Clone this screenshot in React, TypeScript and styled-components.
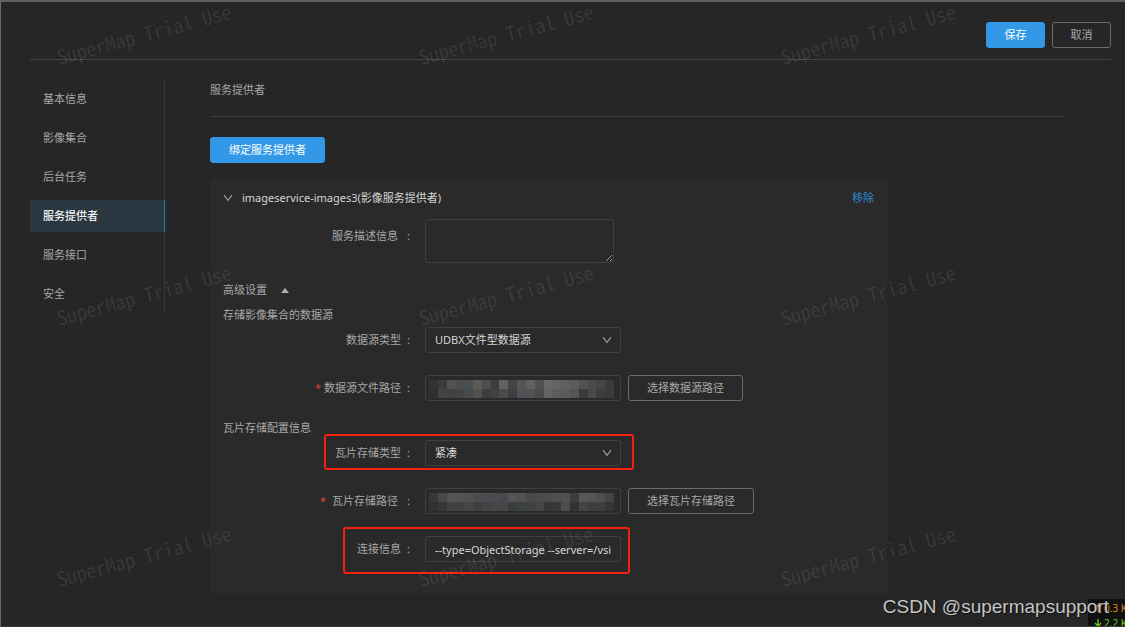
import React from "react";
import styled, { createGlobalStyle } from "styled-components";

const GlobalStyle = createGlobalStyle`
  *, *::before, *::after { box-sizing: border-box; }
  html { color-scheme: dark; }
  body {
    margin: 0;
    background: #262626;
    color: #a8a8a8;
    font-family: "Noto Sans", "Noto Sans CJK SC", sans-serif;
    font-size: 11px;
    line-height: 16px;
  }
  button, input, select, textarea { font: inherit; color: inherit; margin: 0; }
`;

const Page = styled.div`
  position: relative;
  min-height: 100vh;
  overflow: hidden;
  background: #262626;
  border-top: 2px solid #606060;
  border-left: 1px solid #6a6a6a;
  border-bottom: 1px solid #3c3a3a;
  padding: 0 14px 32px 29px;
`;

const TopBar = styled.header`
  display: flex;
  justify-content: flex-end;
  gap: 7px;
  padding: 20px 0 11px;
  border-bottom: 1px solid #454545;
`;

const Button = styled.button<{ $primary?: boolean }>`
  height: 26px;
  padding: 0 18px;
  border-radius: 3px;
  border: 1px solid ${(p) => (p.$primary ? "#3399e6" : "#6c6c6c")};
  background: ${(p) => (p.$primary ? "#3399e6" : "transparent")};
  color: ${(p) => (p.$primary ? "#ffffff" : "#a8a8a8")};
  line-height: 16px;
  white-space: nowrap;
  cursor: pointer;
`;

const ActionButton = styled(Button)`
  min-width: 59px;
  padding: 0 17px;
`;

const Body = styled.div`
  display: flex;
  align-items: flex-start;
  gap: 45px;
  padding-top: 20px;
`;

const SideNav = styled.nav`
  flex: 0 0 135px;
  display: flex;
  flex-direction: column;
  gap: 7px;
  padding: 3px 0 1px;
  border-right: 1px solid #383838;
`;

const NavItem = styled.a<{ $active?: boolean }>`
  display: flex;
  align-items: center;
  height: 32px;
  padding-left: 13px;
  margin-right: -1px;
  text-decoration: none;
  color: ${(p) => (p.$active ? "#f4f4f4" : "#a8a8a8")};
  font-weight: ${(p) => (p.$active ? 500 : 400)};
  background: ${(p) => (p.$active ? "#2a3741" : "transparent")};
  border-right: 1px solid ${(p) => (p.$active ? "#3378ad" : "transparent")};
`;

const Main = styled.main`
  flex: 1;
  min-width: 0;
  margin-right: 46px;
`;

const Title = styled.h1`
  margin: 0 0 20px;
  padding: 2px 0 18px;
  font-size: 11px;
  line-height: 16px;
  font-weight: 400;
  border-bottom: 1px solid #3b3b3b;
`;

const Card = styled.section`
  max-width: 677px;
  margin-top: 15px;
  padding: 8px 13px 32px;
  border-radius: 3px;
  background: #2a2a2a;
`;

const CardHeader = styled.div`
  display: flex;
  align-items: center;
  gap: 9px;
  height: 24px;
  margin-bottom: 9px;
  color: #d6d6d6;
`;

const CardName = styled.h2`
  flex: 1;
  margin: 0;
  font-size: 11px;
  font-weight: 400;
`;

const TextLink = styled.a`
  color: #2f86cc;
  text-decoration: none;
`;

const Advanced = styled.button`
  display: flex;
  align-items: center;
  gap: 14px;
  height: 24px;
  margin-top: 15px;
  padding: 0;
  border: 0;
  background: none;
  cursor: pointer;
`;

const Section = styled.h3<{ $spaced?: boolean }>`
  height: 24px;
  margin: ${(p) => (p.$spaced ? "15px" : "1px")} 0 0;
  font-size: 11px;
  line-height: 24px;
  font-weight: 400;
`;

const Row = styled.div<{ $spaced?: boolean }>`
  position: relative;
  display: flex;
  align-items: flex-start;
  margin-top: ${(p) => (p.$spaced ? "22px" : "0")};
`;

const Label = styled.label<{ $tall?: boolean }>`
  flex: 0 0 202px;
  display: flex;
  justify-content: flex-end;
  padding-right: 15px;
  line-height: ${(p) => (p.$tall ? "34px" : "26px")};
`;

const Required = styled.span<{ $wide?: boolean }>`
  margin-right: ${(p) => (p.$wide ? "6px" : "3px")};
  color: #d9433f;
`;

const Colon = styled.span<{ $wide?: boolean }>`
  margin-left: ${(p) => (p.$wide ? "9px" : "6px")};
`;

const Field = styled.div`
  position: relative;
  width: 196px;
  margin-right: 7px;
`;

const fieldLook = `
  display: block;
  border: 1px solid #404040;
  border-radius: 3px;
  background: transparent;
  color: #d6d6d6;
  outline: none;
`;

const TextArea = styled.textarea`
  ${fieldLook}
  width: 189px;
  height: 44px;
  resize: both;
`;

const Input = styled.input`
  ${fieldLook}
  width: 100%;
  height: 26px;
  padding: 0 9px;
`;

const Select = styled.select`
  ${fieldLook}
  width: 100%;
  height: 26px;
  padding: 0 24px 0 9px;
  appearance: none;
`;

const SelectArrow = styled.span`
  position: absolute;
  top: 8px;
  right: 9px;
  display: flex;
  pointer-events: none;
`;

const Redaction = styled.svg`
  position: absolute;
  top: 5px;
  left: 4px;
  width: 185px;
  height: 18px;
  pointer-events: none;
`;

const Highlight = styled.div<{ $inset: string }>`
  position: absolute;
  inset: ${(p) => p.$inset};
  border: 2px solid #f5200f;
  border-radius: 3px;
  pointer-events: none;
`;

const Watermarks = styled.div`
  position: absolute;
  inset: 0;
  display: grid;
  grid-template-columns: repeat(auto-fill, 362px);
  grid-auto-rows: 261px;
  overflow: hidden;
  pointer-events: none;
`;

const Watermark = styled.span`
  justify-self: start;
  align-self: start;
  margin: 22px 0 0 53px;
  font-family: "Noto Sans CJK SC", monospace;
  font-feature-settings: "hwid";
  font-size: 20px;
  line-height: 20px;
  white-space: nowrap;
  color: rgba(255, 255, 255, 0.09);
  transform: rotate(-15deg);
`;

const NetMeter = styled.div`
  position: absolute;
  right: 0;
  bottom: -1px;
  width: 37px;
  height: 28px;
  padding: 1px 0 0 6px;
  overflow: hidden;
  background: #111111;
`;

const Rate = styled.div<{ $up?: boolean }>`
  display: flex;
  align-items: center;
  gap: 2px;
  width: 60px;
  height: 15px;
  font-size: 10px;
  white-space: nowrap;
  color: ${(p) => (p.$up ? "#d98a12" : "#66d012")};
`;

const Credit = styled.div`
  position: absolute;
  right: 16px;
  bottom: 7px;
  font-family: "Liberation Sans", Arial, sans-serif;
  font-size: 19px;
  line-height: 24px;
  color: #c4c4c4;
  text-shadow: 1px 1px 1px #111111;
`;

const Chevron = () => (
  <svg width="10" height="10" viewBox="0 0 10 10" fill="none" stroke="#a4a4a4" strokeWidth="1.1">
    <path d="M1 2.2 L5 7.4 L9 2.2" />
  </svg>
);

const Triangle = () => (
  <svg width="8" height="5" viewBox="0 0 8 5" fill="#b0b0b0">
    <path d="M4 0 L8 5 H0 Z" />
  </svg>
);

const Arrow = ({ up }: { up?: boolean }) => (
  <svg width="8" height="8" viewBox="0 0 8 8" fill="none" stroke="currentColor" strokeWidth="1.3">
    <path d={up ? "M4 8 V1 M1 4 L4 1 L7 4" : "M4 0 V7 M1 4 L4 7 L7 4"} />
  </svg>
);

const Mosaic = ({ rows }: { rows: string[][] }) => (
  <Redaction viewBox="0 0 21 2" preserveAspectRatio="none" shapeRendering="crispEdges" aria-hidden="true">
    {rows.map((row, y) =>
      row.map((c, x) => <rect key={`${x}-${y}`} x={x} y={y} width="1" height="1" fill={`#${c}`} />)
    )}
  </Redaction>
);

const sourceTiles = [
  "303432 3b3b3b 555250 4b4b50 485050 5c5c57 4e4e4e 3c3c3e 626262 454545 555555 5f6060 505052 686868 656565 625f60 5c5c5c 525252 4b4b4b 474447 3a3b3e".split(" "),
  "303231 444442 414141 424345 464a4a 52524d 3c3e3e 414343 4b4b48 403d42 505356 515454 4a494c 646466 5d5b5b 5b5959 535653 3b3b3c 4a4a4d 3c3d3d 393b3b".split(" "),
];

const tileTiles = [
  "353a38 4c4847 555355 555355 525252 4e4b51 4e4b53 4c4c50 484851 555557 505252 4c4647 4b4c4c 4b4d4d 505050 505050 3d3d3b 565858 545655 4f4f4d 43433f".split(" "),
  "303231 363837 424242 40403f 454548 3d4040 424444 474545 484747 3a3d3d 3d4040 3e4141 444545 363636 393939 4c4d4f 333333 454545 3d3e3d 3d403e 333634".split(" "),
];

const navItems = ["基本信息", "影像集合", "后台任务", "服务提供者", "服务接口", "安全"];

export default function App() {
  return (
    <>
      <GlobalStyle />
      <Page>
        <TopBar>
          <ActionButton $primary type="button">保存</ActionButton>
          <ActionButton type="button">取消</ActionButton>
        </TopBar>
        <Body>
          <SideNav>
            {navItems.map((name) => (
              <NavItem key={name} href="#" $active={name === "服务提供者"}>{name}</NavItem>
            ))}
          </SideNav>
          <Main>
            <Title>服务提供者</Title>
            <Button $primary type="button">绑定服务提供者</Button>
            <Card>
              <CardHeader>
                <Chevron />
                <CardName>imageservice-images3(影像服务提供者)</CardName>
                <TextLink href="#">移除</TextLink>
              </CardHeader>
              <Row>
                <Label htmlFor="description" $tall>服务描述信息<Colon $wide>:</Colon></Label>
                <TextArea id="description" />
              </Row>
              <Advanced type="button">高级设置<Triangle /></Advanced>
              <Section>存储影像集合的数据源</Section>
              <Row>
                <Label htmlFor="source-type">数据源类型<Colon>:</Colon></Label>
                <Field>
                  <Select id="source-type"><option>UDBX文件型数据源</option></Select>
                  <SelectArrow><Chevron /></SelectArrow>
                </Field>
              </Row>
              <Row $spaced>
                <Label htmlFor="source-path"><Required>*</Required>数据源文件路径<Colon>:</Colon></Label>
                <Field>
                  <Input id="source-path" />
                  <Mosaic rows={sourceTiles} />
                </Field>
                <Button type="button">选择数据源路径</Button>
              </Row>
              <Section $spaced>瓦片存储配置信息</Section>
              <Row>
                <Label htmlFor="tile-type">瓦片存储类型<Colon>:</Colon></Label>
                <Field>
                  <Select id="tile-type"><option>紧凑</option></Select>
                  <SelectArrow><Chevron /></SelectArrow>
                </Field>
                <Highlight $inset="-6px 240px -4px 101px" />
              </Row>
              <Row $spaced>
                <Label htmlFor="tile-path"><Required $wide>*</Required>瓦片存储路径<Colon $wide>:</Colon></Label>
                <Field>
                  <Input id="tile-path" />
                  <Mosaic rows={tileTiles} />
                </Field>
                <Button type="button">选择瓦片存储路径</Button>
              </Row>
              <Row $spaced>
                <Label htmlFor="connection">连接信息<Colon>:</Colon></Label>
                <Field>
                  <Input id="connection" defaultValue="--type=ObjectStorage --server=/vsi" />
                </Field>
                <Highlight $inset="-9px 244px -12px 120px" />
              </Row>
            </Card>
          </Main>
        </Body>
        <Watermarks aria-hidden="true">
          {Array.from({ length: 9 }, (_, i) => (
            <Watermark key={i}>SuperMap Trial Use</Watermark>
          ))}
        </Watermarks>
        <NetMeter>
          <Rate $up><Arrow up />0.3 K</Rate>
          <Rate><Arrow />2.2 K</Rate>
        </NetMeter>
        <Credit>CSDN @supermapsupport</Credit>
      </Page>
    </>
  );
}
